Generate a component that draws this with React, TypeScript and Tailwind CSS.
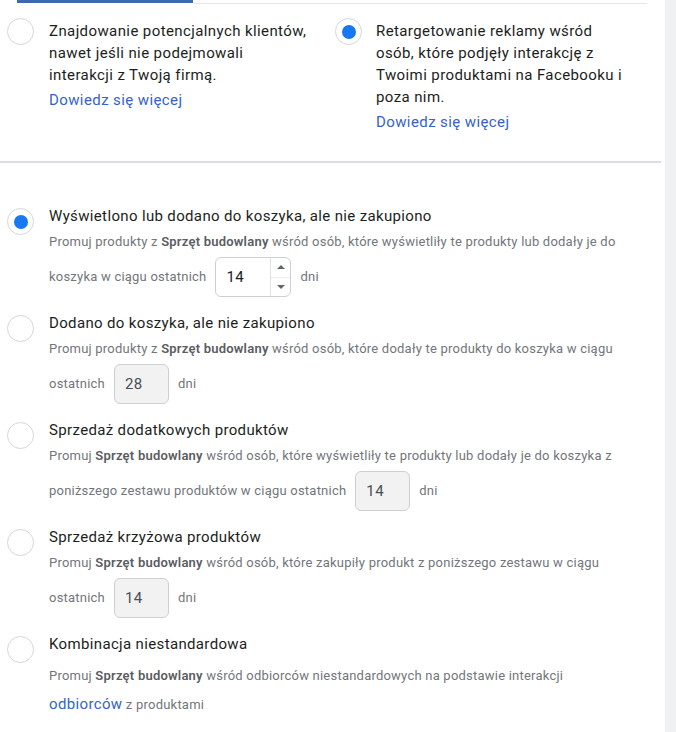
const font = { fontFamily: "Roboto, 'Noto Sans', Arial, sans-serif" };

function Radio({ checked }: { checked?: boolean }) {
  return (
    <div className="w-[27px] h-[27px] shrink-0 rounded-full border border-[#d3d6db] bg-white flex items-center justify-center">
      {checked && <div className="w-[14px] h-[14px] rounded-full bg-[#1877f2]" />}
    </div>
  );
}

function Spinner({ value }: { value: string }) {
  return (
    <div className="flex w-[76px] h-[40px] rounded-[6px] border border-[#ccd0d5] bg-white">
      <div className="flex-1 flex items-center pl-[10px] text-[15px] tracking-[0.4px] text-[#1c1e21]">{value}</div>
      <div className="w-[20px] border-l border-[#dddfe2] flex flex-col">
        <div className="flex-1 flex items-center justify-center border-b border-[#eceef0]">
          <div className="w-0 h-0 border-l-[4px] border-r-[4px] border-b-[4px] border-l-transparent border-r-transparent border-b-[#606770]" />
        </div>
        <div className="flex-1 flex items-center justify-center">
          <div className="w-0 h-0 border-l-[4px] border-r-[4px] border-t-[4px] border-l-transparent border-r-transparent border-t-[#606770]" />
        </div>
      </div>
    </div>
  );
}

function Days({ value }: { value: string }) {
  return (
    <div className="w-[55px] h-[40px] rounded-[6px] border border-[#ccd0d5] bg-[#f2f2f2] flex items-center pl-[10px] text-[15px] tracking-[0.4px] text-[#4b4f56]">
      {value}
    </div>
  );
}

const B = ({ children }: { children: React.ReactNode }) => (
  <span className="font-semibold text-[#5a5d63]">{children}</span>
);

const title = "text-[15px] leading-[22px] tracking-[0.35px] text-[#1c1e21]";
const desc = "text-[13px] tracking-[0.22px] text-[#73767b]";

export default function App() {
  return (
    <div className="flex min-h-screen bg-white" style={font}>
      <div className="w-[665px] shrink-0">
        {/* Tabs underline */}
        <div className="flex h-[4px] pr-[18px]">
          <div className="ml-[17px] w-[176px] h-[3px] bg-[#4267b2]" />
          <div className="flex-1 mt-[3px] h-px bg-[#e4e6eb]" />
        </div>

        {/* Audience type */}
        <div className="flex pt-[14px] pb-[28px] text-[15px] leading-[22px] tracking-[0.4px] text-[#1c1e21]">
          <div className="w-[335px] pl-[7px] flex gap-[15px]">
            <Radio />
            <div className="pt-[2px] whitespace-nowrap">
              <div>Znajdowanie potencjalnych klientów,</div>
              <div>nawet jeśli nie podejmowali</div>
              <div>interakcji z Twoją firmą.</div>
              <div className="mt-[3px] text-[#3563c9]">Dowiedz się więcej</div>
            </div>
          </div>
          <div className="flex gap-[14px]">
            <Radio checked />
            <div className="pt-[2px] whitespace-nowrap">
              <div>Retargetowanie reklamy wśród</div>
              <div>osób, które podjęły interakcję z</div>
              <div>Twoimi produktami na Facebooku i</div>
              <div>poza nim.</div>
              <div className="mt-[3px] text-[#3563c9]">Dowiedz się więcej</div>
            </div>
          </div>
        </div>

        <div className="h-[2px] w-[661px] bg-[#dadde1]" />

        {/* Options */}
        <div className="pt-[42px] pl-[7px] flex flex-col gap-[15px] whitespace-nowrap">
          <div className="flex gap-[15px]">
            <div className="mt-[3px]"><Radio checked /></div>
            <div>
              <div className={title}>Wyświetlono lub dodano do koszyka, ale nie zakupiono</div>
              <div className={`${desc} leading-[30px]`}>
                Promuj produkty z <B>Sprzęt budowlany</B> wśród osób, które wyświetliły te produkty lub dodały je do
              </div>
              <div className={`${desc} flex items-center gap-[9px] h-[40px]`}>
                <span>koszyka w ciągu ostatnich</span>
                <Spinner value="14" />
                <span>dni</span>
              </div>
            </div>
          </div>

          <div className="flex gap-[15px]">
            <div className="mt-[3px]"><Radio /></div>
            <div>
              <div className={title}>Dodano do koszyka, ale nie zakupiono</div>
              <div className={`${desc} leading-[30px]`}>
                Promuj produkty z <B>Sprzęt budowlany</B> wśród osób, które dodały te produkty do koszyka w ciągu
              </div>
              <div className={`${desc} flex items-center gap-[9px] h-[40px]`}>
                <span>ostatnich</span>
                <Days value="28" />
                <span>dni</span>
              </div>
            </div>
          </div>

          <div className="flex gap-[15px]">
            <div className="mt-[3px]"><Radio /></div>
            <div>
              <div className={title}>Sprzedaż dodatkowych produktów</div>
              <div className={`${desc} leading-[30px]`}>
                Promuj <B>Sprzęt budowlany</B> wśród osób, które wyświetliły te produkty lub dodały je do koszyka z
              </div>
              <div className={`${desc} flex items-center gap-[9px] h-[40px]`}>
                <span>poniższego zestawu produktów w ciągu ostatnich</span>
                <Days value="14" />
                <span>dni</span>
              </div>
            </div>
          </div>

          <div className="flex gap-[15px]">
            <div className="mt-[3px]"><Radio /></div>
            <div>
              <div className={title}>Sprzedaż krzyżowa produktów</div>
              <div className={`${desc} leading-[30px]`}>
                Promuj <B>Sprzęt budowlany</B> wśród osób, które zakupiły produkt z poniższego zestawu w ciągu
              </div>
              <div className={`${desc} flex items-center gap-[9px] h-[40px]`}>
                <span>ostatnich</span>
                <Days value="14" />
                <span>dni</span>
              </div>
            </div>
          </div>

          <div className="flex gap-[15px]">
            <div className="mt-[3px]"><Radio /></div>
            <div>
              <div className={title}>Kombinacja niestandardowa</div>
              <div className={`${desc} mt-[6px] leading-[30px]`}>
                Promuj <B>Sprzęt budowlany</B> wśród odbiorców niestandardowych na podstawie interakcji
              </div>
              <div className={`${desc} leading-[26px]`}>
                <span className="text-[15px] tracking-[0.35px] text-[#3563c9]">odbiorców</span> z produktami
              </div>
            </div>
          </div>
        </div>
      </div>
      <div className="flex-1 bg-[#f0f1f2]" />
    </div>
  );
}
